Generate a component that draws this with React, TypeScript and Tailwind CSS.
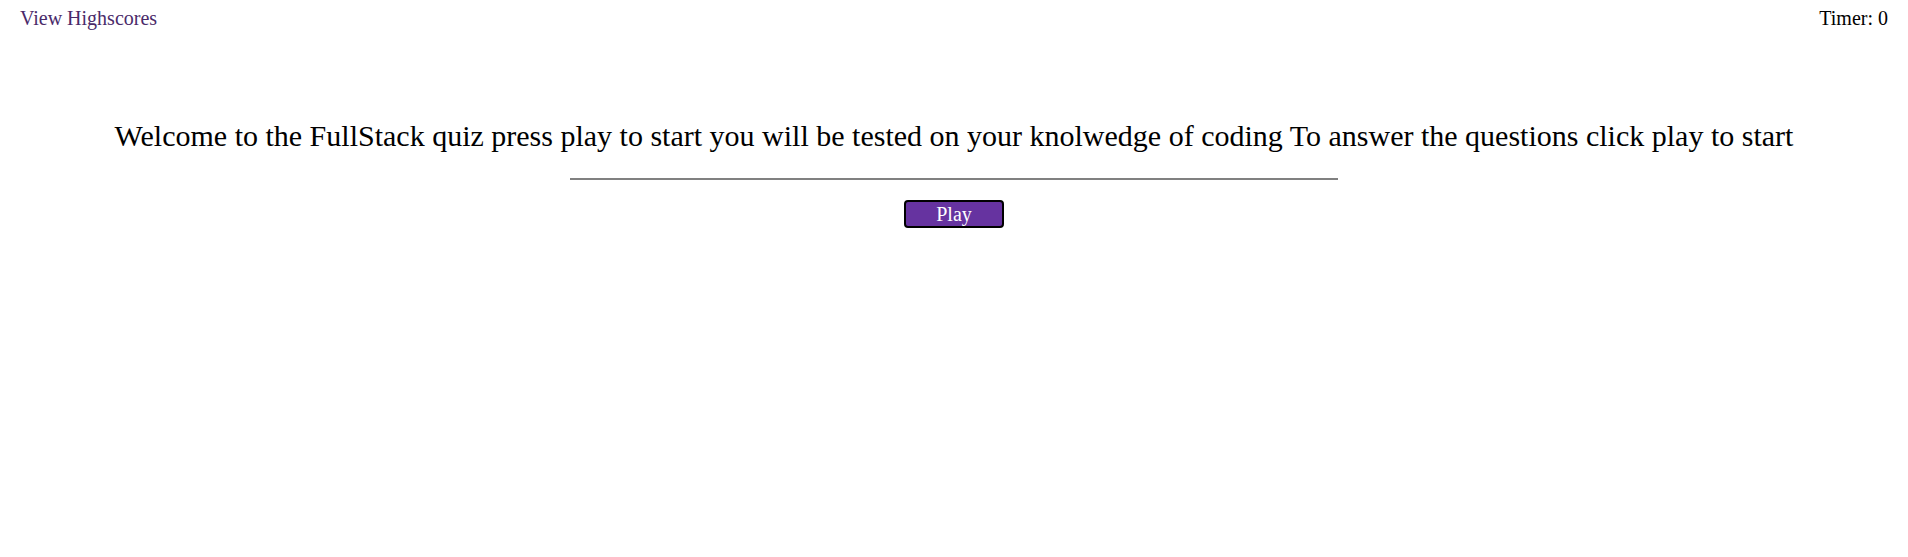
export default function App() {
  return (
    <div className="min-h-[557px] bg-white font-['Liberation_Serif',_'Times_New_Roman',_serif] text-black">
      <header className="flex items-start justify-between px-5 pt-[7px]">
        <a href="#" className="text-[20px] leading-[23px] text-[#4a2a6a]">View Highscores</a>
        <span className="text-[20px] leading-[23px]">Timer: 0</span>
      </header>
      <main className="mt-[89px] flex flex-col items-center">
        <h1 className="text-[30px] leading-[34px]">
          Welcome to the FullStack quiz press play to start you will be tested on your knolwedge of coding To answer the questions click play to start
        </h1>
        <div className="mt-[25px] h-[2px] w-[768px] bg-[#808080]" />
        <button className="mt-[20px] h-[28px] w-[100px] rounded-[4px] border-2 border-black bg-[#6633a0] text-[20px] leading-none text-white">
          Play
        </button>
      </main>
    </div>
  )
}
